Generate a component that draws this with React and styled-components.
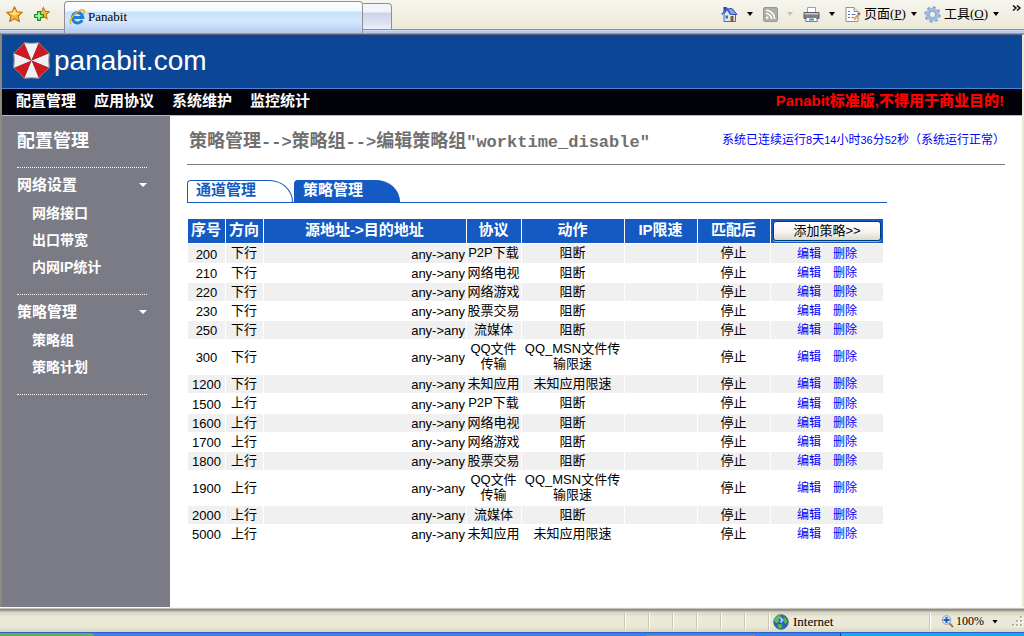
import styled, { createGlobalStyle, css } from "styled-components";

const GlobalStyle = createGlobalStyle`
  *, *::before, *::after {
    box-sizing: border-box;
  }

  body {
    margin: 0;
    background-color: #ece9d8;
    color: #000;
    font-family: "Liberation Sans", "Noto Sans CJK SC", sans-serif;
    font-size: 13px;
  }

  a {
    color: inherit;
    text-decoration: none;
  }

  button {
    font-family: inherit;
  }

  ul {
    list-style: none;
    margin: 0;
    padding: 0;
  }
`;

/* ---------- browser window ---------- */

const Window = styled.div`
  min-height: 100vh;
  display: flex;
  flex-direction: column;
`;

const Toolbar = styled.div`
  height: 34px;
  display: flex;
  align-items: flex-start;
  background: linear-gradient(
    #f6f5ee 0px,
    #ece9d8 29px,
    #8d8f95 29px,
    #8d8f95 30px,
    #e6eefb 30px,
    #b5c9f2 31px,
    #b5c9f2 33px,
    #9a9a8c 33px
  );
`;

const ToolButton = styled.button`
  border: none;
  background: none;
  padding: 0 ${(props) => (props.$split ? "3px" : 0)} 0 0;
  height: 28px;
  display: flex;
  align-items: center;
  gap: 3px;
  color: #000;
  font-family: "Liberation Serif", "Noto Sans CJK SC", serif;
  font-size: 13px;
  line-height: 16px;
  white-space: nowrap;
`;

const Favorites = styled.div`
  width: 64px;
  padding-left: 6px;
  display: flex;
  gap: 10px;
`;

const BrowserTab = styled.div`
  width: 299px;
  height: 32px;
  flex-shrink: 1;
  margin-top: 1px;
  padding: 0 0 2px 4px;
  display: flex;
  align-items: center;
  gap: 3px;
  border: 1px solid #8d9097;
  border-bottom: none;
  border-radius: 4px 4px 0 0;
  background: linear-gradient(#fff 0px, #f0f8ff 9px, #c8e2fa 10px, #d4e7fd 20px, #b5c9f2 31px);
  font-family: "Liberation Serif", serif;
  font-size: 13px;
`;

const NewTab = styled.button`
  width: 29px;
  height: 27px;
  margin-top: 3px;
  border: 1px solid #8d9097;
  border-left: none;
  border-radius: 0 4px 0 0;
  background: linear-gradient(#f2f4fa 0 8px, #ccd3e8 9px, #dfe4f4 20px, #eceffa);
`;

const Tools = styled.div`
  margin-left: auto;
  display: flex;
  gap: 7px;
`;

const Arrow = styled.span`
  width: 6px;
  height: 4px;
  margin-left: ${(props) => (props.$wide ? "6px" : "2px")};
  background-color: ${(props) => props.$color || "#000"};
  clip-path: polygon(0 0, 100% 0, 50% 100%);
`;

const More = styled.button`
  border: none;
  background: none;
  padding: 0;
  width: 16px;
  height: 12px;
  margin-left: 2px;
`;

const StatusBar = styled.footer`
  height: 25px;
  padding-top: 3px;
  display: flex;
  align-items: center;
  justify-content: flex-end;
  border-top: 1px solid #f8f7f0;
  background: linear-gradient(
    #fff 0px,
    #8d8c7f 1px,
    #8d8c7f 2px,
    #d6d3c2 4px,
    #ece9d8 9px,
    #ece9d8 18px,
    #dad6c1 24px
  );
`;

const Pane = styled.div`
  width: ${(props) => props.$width || 24}px;
  height: 17px;
  padding-left: ${(props) => (props.$width ? "4px" : 0)};
  display: flex;
  align-items: center;
  gap: 4px;
  border-left: 1px solid #c9c6b6;
  box-shadow: inset 1px 0 #fff;
  font-family: "Liberation Serif", serif;
  font-size: 13px;
`;

const ZoomPane = styled(Pane)`
  padding-left: 11px;
  gap: 2px;
  font-size: 12px;
`;

const Taskbar = styled.div`
  height: 4px;
  display: flex;
  border-top: 1px solid #2a62c8;
  background-color: #3b80e8;
`;

const StartEdge = styled.span`
  width: 94px;
  background-color: #62ac5c;
  border-top-right-radius: 3px;
`;

const TaskEdge = styled.span`
  width: 109px;
  margin-left: auto;
  margin-right: 85px;
  border-bottom: 1px solid #c77d2c;
`;

const TrayEdge = styled.span`
  width: 184px;
  border-left: 1px solid #10408c;
  background-color: #14a8f0;
`;

/* ---------- page ---------- */

const Page = styled.div`
  flex: 1;
  display: flex;
  flex-direction: column;
  border-left: 2px solid #8b8a7c;
  border-top: 1px solid #5e6270;
  border-right: 2px solid #ece9d8;
  background-color: #fff;
`;

const Header = styled.header`
  height: 54px;
  padding: 0 0 2px 10px;
  display: flex;
  align-items: center;
  gap: 3px;
  background-color: #0c4697;
  border-bottom: 1px solid #4d86d6;
  color: #fff;
  font-size: 28px;
  line-height: 32px;
`;

const Nav = styled.nav`
  height: 27px;
  padding: 0 18px 2px 14px;
  display: flex;
  align-items: center;
  gap: 18px;
  background-color: #02020a;
  border-bottom: 1px solid #b4bcc4;
  color: #fff;
  font-size: 15px;
  font-weight: bold;
  line-height: 20px;
`;

const License = styled.strong`
  margin-left: auto;
  color: #f00;
`;

const Body = styled.div`
  flex: 1;
  display: flex;
`;

const Sidebar = styled.aside`
  width: 168px;
  padding: 10px 23px 0 15px;
  flex-shrink: 0;
  background-color: #7b7b85;
  color: #fff;
  font-weight: bold;
`;

const SidebarTitle = styled.h2`
  margin: 0 0 11px;
  font-size: 18px;
  line-height: 30px;
`;

const Section = styled.section`
  padding-bottom: 13px;
  border-top: 1px dotted #fff;

  &:last-child {
    border-bottom: 1px dotted #fff;
  }
`;

const SectionHead = styled.h3`
  height: 32px;
  margin: 0;
  padding-top: 2px;
  display: flex;
  align-items: center;
  justify-content: space-between;
  font-size: 15px;
  line-height: 20px;
`;

const SectionArrow = styled(Arrow)`
  width: 8px;
  height: 4px;
`;

const SubItem = styled.li`
  padding-left: 15px;
  font-size: 14px;
  line-height: 27px;
`;

const Main = styled.main`
  flex: 1;
  padding: 0 17px 20px;
`;

const TitleBar = styled.div`
  height: 49px;
  padding-left: 2px;
  display: flex;
  align-items: center;
  justify-content: space-between;
  border-bottom: 1px solid #7b7b85;
`;

const Breadcrumb = styled.h1`
  margin: 0;
  padding-top: 4px;
  color: #707070;
  font-size: 18px;
  line-height: 24px;
  white-space: nowrap;
`;

const Code = styled.span`
  font-family: "Liberation Mono", monospace;
  font-size: 17px;
`;

const Uptime = styled.p`
  margin: 0;
  color: #00f;
  font-size: 12px;
  line-height: 18px;
  white-space: nowrap;
`;

const Digits = styled.span`
  font-size: 11px;
`;

const Panel = styled.div`
  max-width: 700px;
`;

const Tabs = styled.div`
  margin: 15px 0;
  display: flex;
  gap: 1px;
  border-bottom: 1px solid #145ac2;
`;

const Tab = styled.a`
  width: 106px;
  height: 22px;
  padding-left: 8px;
  background: ${(props) => (props.$active ? "#145ac2" : "#fff")};
  border: 1px solid #145ac2;
  border-bottom: none;
  border-radius: 5px 30px 0 0 / 5px 28px 0 0;
  color: ${(props) => (props.$active ? "#fff" : "#145ac2")};
  font-size: 15px;
  font-weight: bold;
  line-height: 18px;
`;

const Table = styled.table`
  width: 100%;
  max-width: 697px;
  table-layout: fixed;
  border-collapse: separate;
  border-spacing: 1px;
  font-size: 13px;
`;

const Th = styled.th`
  width: ${(props) => props.$width}px;
  height: 24px;
  padding: 0 1px 2px 0;
  background-color: #145ac2;
  color: #fff;
  font-size: 15px;
  line-height: 22px;
  white-space: nowrap;

  &:last-child {
    padding: 0;
  }
`;

const Tr = styled.tr`
  height: ${(props) => props.$height}px;

  &:nth-child(odd) {
    background-color: #f0f0f0;
  }
`;

const Td = styled.td`
  padding: ${(props) => (props.$low ? "1px 1px 0" : "0 1px 2px 0")};
  text-align: ${(props) => props.$align || "center"};
  line-height: 15px;

  ${(props) =>
    props.$links &&
    css`
      color: #00f;
      font-size: 12px;
    `}
`;

const ActionLink = styled.a`
  margin: 0 6px;
`;

const AddButton = styled.button`
  width: 108px;
  height: 20px;
  padding: 0;
  display: block;
  margin: 0 auto;
  border: 1px solid #003c74;
  border-radius: 3px;
  background: linear-gradient(#fff, #f3f2ec 60%, #dcd8ca);
  box-shadow: 0 1px #8fb4ec;
  color: #000;
  font-size: 13px;
  line-height: 16px;
`;

/* ---------- drawings ---------- */

const STAR =
  "M8 0.8 L10.2 5.4 L15.3 6 L11.5 9.4 L12.6 14.6 L8 12 L3.4 14.6 L4.5 9.4 L0.7 6 L5.8 5.4 Z";

function StarIcon() {
  return (
    <svg width="17" height="17" viewBox="0 0 16 16">
      <path d={STAR} fill="#fbb02c" stroke="#b9721a" strokeLinejoin="round" />
      <path d="M8 2.5 L9.6 6.2 L13.5 6.9 L8 9 L2.9 6.9 L6.5 6.2 Z" fill="#ffe07c" />
    </svg>
  );
}

function AddStarIcon() {
  return (
    <svg width="17" height="17" viewBox="0 0 17 17">
      <g transform="translate(4 1) scale(0.8)">
        <path d={STAR} fill="#fbb83c" stroke="#b9761a" strokeWidth="1.3" />
      </g>
      <path
        d="M4.5 5.5h3v3h3v3h-3v3h-3v-3h-3v-3h3z"
        fill="#5ddc4d"
        stroke="#128c1c"
      />
      <path d="M6 7v6M3 10h6" stroke="#d8ffd0" />
    </svg>
  );
}

function BrowserIcon() {
  return (
    <svg width="16" height="16" viewBox="0 0 16 16">
      <path
        d="M13.2 11.2a5.2 5.2 0 1 1 .6-2.7H4.6"
        fill="none"
        stroke="#1f7fd4"
        strokeWidth="3"
      />
      <path
        d="M2.2 15C-0.6 13 3 6.500 8 3.200 C11.500 0.800 15 0 15.300 2.200 C15.400 3.200 15 4 14.600 4.600"
        fill="none"
        stroke="#e9ae2c"
        strokeWidth="1.5"
      />
    </svg>
  );
}

function HomeIcon() {
  return (
    <svg width="17" height="17" viewBox="0 0 17 17">
      <path d="M2.500 1h3v5h-3z" fill="#2a3c9c" />
      <path d="M3 8 L6 4 L12 4 L14.500 8 V15.500 H3 Z" fill="#dce8f8" stroke="#51699c" />
      <path d="M6 3 L11 2.500 L16 8.500 H10 Z" fill="#7fa6e4" stroke="#2f50b0" />
      <path d="M0.800 8.500 L6 2.500 L9.500 8.500" fill="none" stroke="#3a62c4" strokeWidth="1.500" />
      <path d="M4.500 9.500h2.500v3h-2.500z" fill="#3c6cb8" />
      <path d="M9.500 10h3v5.500h-3z" fill="#8a5a2a" />
    </svg>
  );
}

function FeedIcon() {
  return (
    <svg width="15" height="15" viewBox="0 0 15 15">
      <rect x="0.5" y="0.5" width="14" height="14" rx="1.500" fill="#aeaea9" stroke="#989893" />
      <circle cx="4.2" cy="10.800" r="1.300" fill="#fff" />
      <path d="M3 6.500a5.500 5.500 0 0 1 5.500 5.500M3 3.300a8.700 8.700 0 0 1 8.700 8.700" fill="none" stroke="#fff" strokeWidth="1.500" />
    </svg>
  );
}

function PrinterIcon() {
  return (
    <svg width="17" height="17" viewBox="0 0 17 17">
      <path d="M4.500 1.500h8V7h-8z" fill="#fff" stroke="#9aa0aa" />
      <path d="M1 6.500h15v6H1z" fill="#7c7f88" stroke="#565a64" />
      <path d="M1.500 7h14v1.500h-14z" fill="#c8cad0" />
      <path d="M3.500 11.500h10l1 4h-12z" fill="#fff" stroke="#7c7f88" />
      <path d="M6 12.500h2v2H6z" fill="#3a9ad8" />
      <path d="M8 12.500h3v2H8z" fill="#3fae54" />
    </svg>
  );
}

function PageIcon() {
  return (
    <svg width="16" height="17" viewBox="0 0 16 17">
      <path d="M1 1.500h8l4 4v10H1z" fill="#fff" stroke="#8b93a4" />
      <path d="M9 1.500v4h4" fill="#dfe5f0" stroke="#8b93a4" />
      <path d="M3 5.500h2M3 8.500h2M3 11.500h2M6.500 8.500h4M6.500 11.500h2" stroke="#5a6fc0" />
      <path d="M9 13.500 L14.500 7.500" stroke="#d9a63a" strokeWidth="2" />
      <path d="M13.500 8.500 L15 7" stroke="#c04a4a" strokeWidth="2" />
    </svg>
  );
}

function GearIcon() {
  return (
    <svg width="17" height="17" viewBox="0 0 17 17">
      <circle cx="8.500" cy="8.500" r="7.200" fill="none" stroke="#7d9dc0" strokeWidth="2" strokeDasharray="2.83 2.83" />
      <circle cx="8.500" cy="8.500" r="5" fill="none" stroke="#9dbce0" strokeWidth="3.600" />
      <circle cx="8.500" cy="8.500" r="3.200" fill="#f2f1e8" stroke="#7d9dc0" />
    </svg>
  );
}

function GlobeIcon() {
  return (
    <svg width="16" height="16" viewBox="0 0 16 16">
      <circle cx="8" cy="8" r="7.300" fill="#2b63bc" stroke="#3c5c84" strokeWidth="0.800" />
      <path d="M1.500 5 C3 2 5 1 7.500 1.200 L8 3.500 L5.500 5.500 L6 7.500 L4 9 L1.500 8 Z" fill="#62c04c" />
      <path d="M10.500 3 L13 4 L14.500 8 L12.500 10 L10.500 7.500 Z" fill="#54b444" />
      <path d="M4.500 10.500 L8 10 L9.500 12 L8 14.800 L5 13.500 Z" fill="#4fc43c" />
      <path d="M7.500 4 L9.500 6 L7.500 8.500" fill="none" stroke="#a8d4f8" strokeWidth="1.800" />
    </svg>
  );
}

function ZoomIcon() {
  return (
    <svg width="13" height="13" viewBox="0 0 13 13">
      <path d="M8 8 L12 12" stroke="#a8783c" strokeWidth="2" />
      <circle cx="5.500" cy="5" r="4.300" fill="#dcebfa" stroke="#8c9cb4" />
      <path d="M5.500 2v6M2.500 5h6" stroke="#1c5cc8" strokeWidth="2" />
    </svg>
  );
}

function Grip() {
  const dots = [[8, 0], [4, 4], [8, 4], [0, 8], [4, 8], [8, 8]];
  return (
    <svg width="12" height="12" viewBox="0 0 12 12">
      {dots.map(([x, y]) => (
        <g key={`${x}-${y}`}>
          <rect x={x + 1} y={y + 1} width="2" height="2" fill="#fff" />
          <rect x={x} y={y} width="2" height="2" fill="#b8b4a0" />
        </g>
      ))}
    </svg>
  );
}

function Umbrella() {
  const point = (deg, r) => {
    const a = (deg * Math.PI) / 180;
    return `${19.5 + r * Math.cos(a)} ${19.5 + r * Math.sin(a)}`;
  };
  return (
    <svg width="39" height="39" viewBox="0 0 39 39">
      {[0, 45, 90, 135, 180, 225, 270, 315].map((deg, i) => (
        <path
          key={deg}
          d={`M19.5 19.5 L${point(deg - 22.5, 19.5)} Q${point(deg, 17)} ${point(deg + 22.5, 19.5)} Z`}
          fill={i % 2 ? "#cf1820" : "#f1f1f3"}
        />
      ))}
      {[0, 45, 90, 135, 180, 225, 270, 315].map((deg) => (
        <path
          key={deg}
          d={`M${point(deg - 22.5, 19.2)} Q${point(deg, 16.8)} ${point(deg + 22.5, 19.2)}`}
          fill="none"
          stroke="#8a7f84"
        />
      ))}
    </svg>
  );
}

/* ---------- data ---------- */

const navItems = ["配置管理", "应用协议", "系统维护", "监控统计"];

const sections = [
  { title: "网络设置", items: ["网络接口", "出口带宽", "内网IP统计"] },
  { title: "策略管理", items: ["策略组", "策略计划"] },
];

const columns = [
  { title: "序号", width: 37 },
  { title: "方向", width: 37 },
  { title: "源地址->目的地址", width: 202 },
  { title: "协议", width: 54 },
  { title: "动作", width: 102 },
  { title: "IP限速", width: 72 },
  { title: "匹配后", width: 72 },
];

const rules = [
  [200, "下行", "P2P下载", "阻断", 19],
  [210, "下行", "网络电视", "阻断", 18],
  [220, "下行", "网络游戏", "阻断", 18],
  [230, "下行", "股票交易", "阻断", 18],
  [250, "下行", "流媒体", "阻断", 18],
  [300, "下行", "QQ文件传输", "QQ_MSN文件传输限速", 34],
  [1200, "下行", "未知应用", "未知应用限速", 18],
  [1500, "上行", "P2P下载", "阻断", 19],
  [1600, "上行", "网络电视", "阻断", 18],
  [1700, "上行", "网络游戏", "阻断", 18],
  [1800, "上行", "股票交易", "阻断", 18],
  [1900, "上行", "QQ文件传输", "QQ_MSN文件传输限速", 34],
  [2000, "上行", "流媒体", "阻断", 18],
  [5000, "上行", "未知应用", "未知应用限速", 18],
];

function BrowserBar() {
  return (
    <Toolbar>
      <Favorites>
        <ToolButton aria-label="Favorites">
          <StarIcon />
        </ToolButton>
        <ToolButton aria-label="Add to favorites">
          <AddStarIcon />
        </ToolButton>
      </Favorites>
      <BrowserTab>
        <BrowserIcon />
        Panabit
      </BrowserTab>
      <NewTab aria-label="New tab" />
      <Tools>
        <ToolButton $split aria-label="Home">
          <HomeIcon />
          <Arrow $wide />
        </ToolButton>
        <ToolButton $split aria-label="Feeds">
          <FeedIcon />
          <Arrow $wide $color="#c4c1b2" />
        </ToolButton>
        <ToolButton $split aria-label="Print">
          <PrinterIcon />
          <Arrow $wide />
        </ToolButton>
        <ToolButton>
          <PageIcon />
          <span>
            页面(<u>P</u>)
          </span>
          <Arrow />
        </ToolButton>
        <ToolButton>
          <GearIcon />
          <span>
            工具(<u>O</u>)
          </span>
          <Arrow />
        </ToolButton>
        <More aria-label="More">
          <svg width="9" height="7" viewBox="0 0 9 7">
            <path d="M1 0.500 L4 3 L1 5.500 M5 0.500 L8 3 L5 5.500" fill="none" stroke="#000" strokeWidth="1.400" />
          </svg>
        </More>
      </Tools>
    </Toolbar>
  );
}

function RuleTable() {
  return (
    <Table>
      <thead>
        <tr>
          {columns.map((col) => (
            <Th key={col.title} $width={col.width}>
              {col.title}
            </Th>
          ))}
          <Th $width={112}>
            <AddButton>添加策略&gt;&gt;</AddButton>
          </Th>
        </tr>
      </thead>
      <tbody>
        {rules.map(([id, direction, protocol, action, height]) => (
          <Tr key={id} $height={height}>
            <Td $low>{id}</Td>
            <Td>{direction}</Td>
            <Td $low $align="right">
              any-&gt;any
            </Td>
            <Td>{protocol}</Td>
            <Td>{action}</Td>
            <Td />
            <Td>停止</Td>
            <Td $low $links>
              <ActionLink href="#edit">编辑</ActionLink>
              <ActionLink href="#delete">删除</ActionLink>
            </Td>
          </Tr>
        ))}
      </tbody>
    </Table>
  );
}

function App() {
  return (
    <Window>
      <GlobalStyle />
      <BrowserBar />
      <Page>
        <Header>
          <Umbrella />
          panabit.com
        </Header>
        <Nav>
          {navItems.map((item) => (
            <a key={item} href="#nav">
              {item}
            </a>
          ))}
          <License>Panabit标准版,不得用于商业目的!</License>
        </Nav>
        <Body>
          <Sidebar>
            <SidebarTitle>配置管理</SidebarTitle>
            {sections.map((section) => (
              <Section key={section.title}>
                <SectionHead>
                  {section.title}
                  <SectionArrow $color="#fff" />
                </SectionHead>
                <ul>
                  {section.items.map((item) => (
                    <SubItem key={item}>
                      <a href="#item">{item}</a>
                    </SubItem>
                  ))}
                </ul>
              </Section>
            ))}
          </Sidebar>
          <Main>
            <TitleBar>
              <Breadcrumb>
                策略管理<Code>--&gt;</Code>策略组<Code>--&gt;</Code>编辑策略组
                <Code>"worktime_disable"</Code>
              </Breadcrumb>
              <Uptime>
                系统已连续运行<Digits>8</Digits>天<Digits>14</Digits>小时
                <Digits>36</Digits>分<Digits>52</Digits>秒（系统运行正常）
              </Uptime>
            </TitleBar>
            <Panel>
              <Tabs>
                <Tab href="#channels">通道管理</Tab>
                <Tab href="#rules" $active>
                  策略管理
                </Tab>
              </Tabs>
              <RuleTable />
            </Panel>
          </Main>
        </Body>
      </Page>
      <StatusBar>
        {[1, 2, 3, 4, 5, 6].map((n) => (
          <Pane key={n} />
        ))}
        <Pane $width={161}>
          <GlobeIcon />
          Internet
        </Pane>
        <ZoomPane $width={83}>
          <ZoomIcon />
          100%
          <Arrow $wide />
        </ZoomPane>
        <Grip />
      </StatusBar>
      <Taskbar>
        <StartEdge />
        <TaskEdge />
        <TrayEdge />
      </Taskbar>
    </Window>
  );
}

export default App;
